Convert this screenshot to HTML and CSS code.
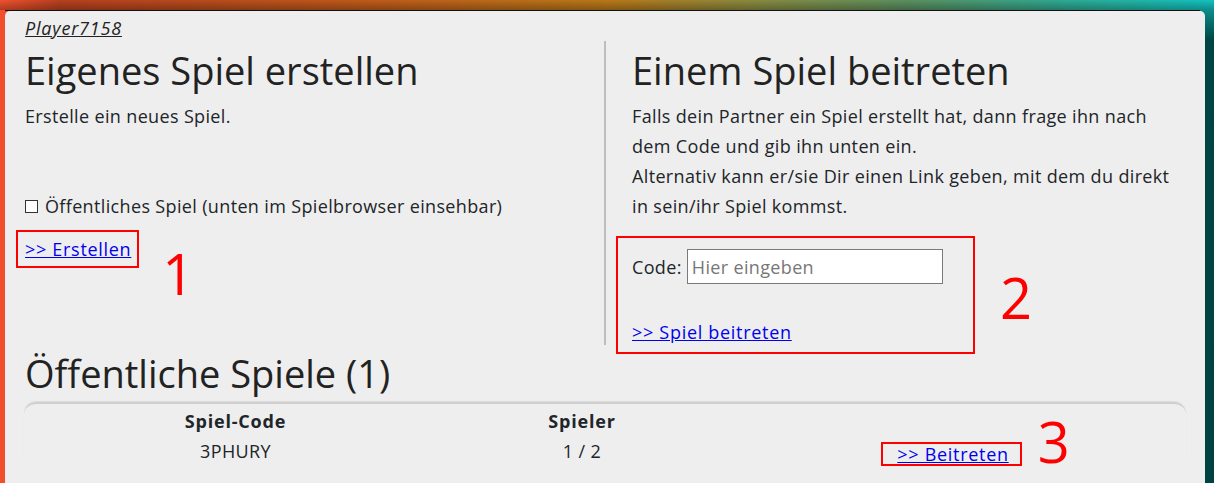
FILE: index.html
```html
<!DOCTYPE html>
<html lang="de">
<head>
<meta charset="utf-8">
<title>Spiel</title>
<link rel="stylesheet" href="styles.css">
</head>
<body>
<div class="topline"></div>
<main class="panel">
  <div class="user"><a href="#" class="user-link">Player7158</a></div>
  <div class="columns">
    <section class="col col-create">
      <h1 class="title">Eigenes Spiel erstellen</h1>
      <p class="text">Erstelle ein neues Spiel.</p>
      <label class="check-row"><input type="checkbox" class="check">Öffentliches Spiel (unten im Spielbrowser einsehbar)</label>
      <div class="mark mark-create"><a href="#" class="link">&gt;&gt; Erstellen</a><span class="num num-1">1</span></div>
    </section>
    <section class="col col-join">
      <h1 class="title">Einem Spiel beitreten</h1>
      <p class="text">Falls dein Partner ein Spiel erstellt hat, dann frage ihn nach<br>dem Code und gib ihn unten ein.<br>Alternativ kann er/sie Dir einen Link geben, mit dem du direkt<br>in sein/ihr Spiel kommst.</p>
      <div class="mark mark-join">
        <div class="code-row"><label class="code-label" for="code">Code:</label><input id="code" class="code-input" type="text" placeholder="Hier eingeben"></div>
        <a href="#" class="link link-join">&gt;&gt; Spiel beitreten</a>
        <span class="num num-2">2</span>
      </div>
    </section>
  </div>
  <h1 class="title title-public">Öffentliche Spiele (1)</h1>
  <div class="games">
    <div class="games-grid">
      <div class="cell head">Spiel-Code</div>
      <div class="cell head">Spieler</div>
      <div class="cell head"></div>
      <div class="cell">3PHURY</div>
      <div class="cell">1 / 2</div>
      <div class="cell"><span class="mark mark-row"><a href="#" class="link">&gt;&gt; Beitreten</a><span class="num num-3">3</span></span></div>
    </div>
  </div>
</main>
</body>
</html>
```

FILE: styles.css
```css
* { box-sizing: border-box; }

html {
  height: 100%;
  background:
    linear-gradient(to bottom, rgba(0,0,0,0) 0, rgba(0,0,0,0.28) 10px) top left / 100% 10px no-repeat,
    linear-gradient(to right, #f0522e 0%, #b8401f 5%, #b84a1c 15%, #c05a1a 30%, #b87818 50%, #8a8a40 62%, #5a9060 75%, #30a890 87%, #12c2c0 100%) top left / 100% 10px no-repeat,
    linear-gradient(#f04e2c, #f04e2c) left top / 50% 100% no-repeat,
    linear-gradient(to bottom, #12a8a2 0, #0a8884 12px, #004545 40px, #004242 100%) right top / 50% 100% no-repeat;
}

body {
  margin: 0;
  padding-top: 10px;
  height: 100%;
  overflow: hidden;
  font-family: "Open Sans", "Noto Sans", sans-serif;
  font-size: 18px;
  letter-spacing: 0.35px;
  color: #212529;
}

.topline {
  height: 1px;
  background: #111;
  margin: 0 14px 0 5px;
}

.panel {
  display: block;
  margin: 0 9px 0 5px;
  background: #eeeeee;
  border-radius: 5px 5px 0 0;
  padding: 5px 19px 0 20px;
  min-height: 480px;
}

.user {
  line-height: 24px;
}

.user-link {
  color: #222;
  font-style: italic;
  letter-spacing: 0.8px;
  text-decoration: underline;
}

.columns {
  display: grid;
  grid-template-columns: 579px 1fr;
}

.col-join {
  border-left: 2px solid #bdbdbd;
  padding-left: 26px;
  margin-top: 1px;
}

.col-join .title {
  margin-top: 5px;
}

.title {
  font-size: 38px;
  font-weight: 400;
  letter-spacing: 0;
  line-height: 48px;
  margin: 6px 0 0;
  color: #222;
}

.text {
  margin: 7px 0 0;
  line-height: 30px;
}

.check-row {
  display: flex;
  align-items: center;
  margin-top: 60px;
  line-height: 30px;
}

.check {
  appearance: none;
  -webkit-appearance: none;
  width: 13px;
  height: 13px;
  margin: 0 7px 0 0;
  border: 1px solid #333;
  background: #fff;
  border-radius: 0;
}

.link {
  color: #0000ee;
  letter-spacing: 0.7px;
  text-decoration: underline;
}

.mark {
  position: relative;
  border: 2px solid #ff0000;
}

.mark-create {
  width: max-content;
  margin: 9px 0 0 -9px;
  padding: 5px 6px 5px 7px;
  line-height: 24px;
}

.mark-join {
  width: 359px;
  margin: 15px 0 -9px -16px;
  padding: 11px 14px 8px;
}

.code-row {
  display: flex;
  align-items: center;
  gap: 5px;
  height: 35px;
}

.code-input {
  width: 256px;
  height: 35px;
  border: 1px solid #7a7a7a;
  background: #fff;
  font-family: inherit;
  font-size: 18px;
  letter-spacing: 0.35px;
  color: #222;
  padding: 0 4px;
  outline: none;
}

.code-input::placeholder {
  color: #777;
}

.link-join {
  display: block;
  width: max-content;
  margin-top: 36px;
  line-height: 24px;
}

.num {
  position: absolute;
  color: #ff0000;
  font-size: 56px;
  line-height: 56px;
  font-weight: 400;
  letter-spacing: 0;
}

.num-1 { left: calc(100% + 25px); top: 13px; }
.num-2 { left: calc(100% + 27px); top: 31px; }
.num-3 { left: calc(100% + 18px); top: -31px; }

.title-public {
  margin-top: 4px;
}

.games {
  margin: 5px 0 0 -1px;
  border-radius: 12px;
  border-top: 2px solid #cfcfcf;
  box-shadow: 0 -1px 1px rgba(0,0,0,0.08);
  height: 66px;
}

.games-grid {
  display: grid;
  grid-template-columns: 423px 270px 1fr;
  align-items: end;
  text-align: center;
  padding-top: 2px;
}

.cell {
  line-height: 30px;
  min-height: 30px;
}

.head {
  font-weight: 700;
  letter-spacing: 0.8px;
}

.mark-row {
  display: inline-block;
  padding: 0 11px 0 14px;
  line-height: 20px;
  vertical-align: -3px;
}
```
